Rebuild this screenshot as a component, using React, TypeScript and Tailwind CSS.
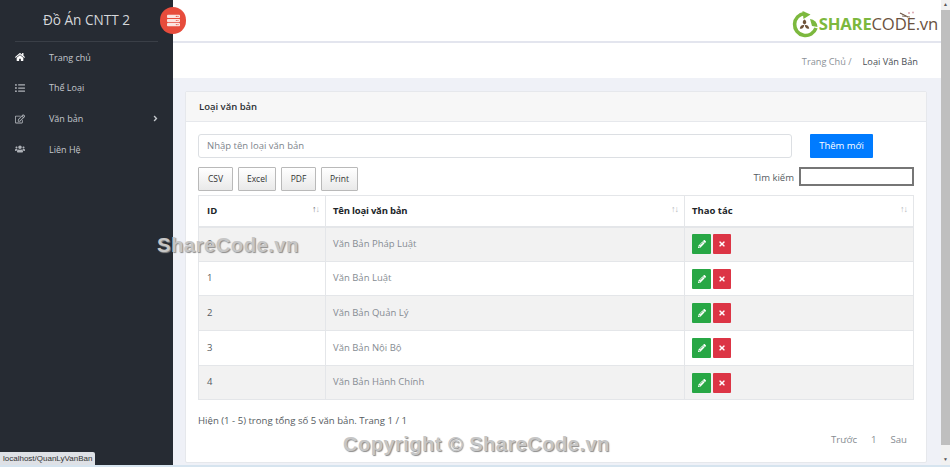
import { FaAngleRight, FaHome, FaListUl, FaPencilAlt, FaRegEdit, FaServer, FaTimes, FaUsers } from "react-icons/fa";

const menu = [
  { label: "Trang chủ", icon: <FaHome className="text-white" /> },
  { label: "Thể Loại", icon: <FaListUl /> },
  { label: "Văn bản", icon: <FaRegEdit />, more: true },
  { label: "Liên Hệ", icon: <FaUsers /> },
];

const rows = [
  { id: "0", name: "Văn Bản Pháp Luật" },
  { id: "1", name: "Văn Bản Luật" },
  { id: "2", name: "Văn Bản Quản Lý" },
  { id: "3", name: "Văn Bản Nội Bộ" },
  { id: "4", name: "Văn Bản Hành Chính" },
];

const exportButtons = [
  { label: "CSV", cls: "w-[35px]" },
  { label: "Excel", cls: "w-[38px]" },
  { label: "PDF", cls: "w-[35px]" },
  { label: "Print", cls: "w-[37px]" },
];

function SortArrows({ active }: { active?: boolean }) {
  return (
    <span className="absolute right-[6px] top-[6px] text-[9px] tracking-[-1px] text-[#b5b8bc]">
      <span className={active ? "text-[#6b7075]" : ""}>↑</span>↓
    </span>
  );
}

function Sidebar() {
  return (
    <aside className="w-[173px] shrink-0 bg-[#262b33] text-[#c3c7cc]">
      <div className="mx-[15px] flex h-[42px] items-center justify-center border-b border-[#3a3f47] text-[13.6px] text-[#d5d7da]">
        Đồ Án CNTT 2
      </div>
      <nav>
        {menu.map((item) => (
          <div key={item.label} className="flex h-[30.7px] items-center pl-[15px] pr-[13px] text-[9px]">
            <span className="w-[34px] text-[10px] text-[#aeb2b8]">{item.icon}</span>
            <span>{item.label}</span>
            {item.more && <FaAngleRight className="ml-auto text-[9px]" />}
          </div>
        ))}
      </nav>
    </aside>
  );
}

function Logo() {
  return (
    <div className="relative flex items-center">
      <svg width="27" height="27" viewBox="0 0 27 27">
        <path d="M13.5 2.5 A11 11 0 1 0 25 17" fill="none" stroke="#7cb83e" strokeWidth="3.6" />
        <path d="M11.5 0 L19.5 3.5 L12.5 8 Z" fill="#7cb83e" />
        <path d="M19 8 A8 8 0 0 1 26.5 16 L21 15 Z" fill="#7cb83e" />
        <path d="M13.5 8.5 C15.8 10 15.8 12.5 13.5 13.6 C11.2 12.5 11.2 10 13.5 8.5 Z" fill="#6f5238" />
        <path d="M8.8 17.5 C9.2 14.5 11.5 13.6 13.2 14.2 C12.8 16.8 11 18.6 8.8 17.5 Z" fill="#6f5238" />
        <path d="M18.2 17.5 C17.8 14.5 15.5 13.6 13.8 14.2 C14.2 16.8 16 18.6 18.2 17.5 Z" fill="#6f5238" />
      </svg>
      <span className="ml-[1px] text-[16.7px] font-bold leading-none tracking-[-0.2px] text-[#7cb83e]">SHARE</span>
      <span className="text-[16.7px] leading-none tracking-[-0.2px] text-[#6b5240]">CODE.vn</span>
      {/* little flourish above the E */}
      <svg className="absolute left-[108px] top-0" width="18" height="7" viewBox="0 0 18 7">
        <path d="M1 2 L9 6" stroke="#6b5240" strokeWidth="1.2" />
        <path d="M3 5 L11 6" stroke="#8a7565" strokeWidth="1" />
        <circle cx="10" cy="2" r="1" fill="#d9a0ac" />
        <circle cx="14" cy="1.5" r="0.9" fill="#d9a0ac" />
      </svg>
    </div>
  );
}

function Card() {
  return (
    <section className="flex h-[372px] flex-col rounded-[2px] border border-[#e6e8ec] bg-white">
      <div className="flex h-[30px] shrink-0 items-center border-b border-[#e6e8ec] bg-[#f7f7f7] px-[13px] pt-[1px] text-[9.5px] font-semibold text-[#2b2f33]">
        Loại văn bản
      </div>
      <div className="flex flex-1 flex-col px-[12px]">
        <div className="mt-[12px] flex items-center">
          <div className="flex h-[24px] w-[594px] items-center rounded-[3px] border border-[#dcdfe3] px-[8px] pt-[1px] text-[9.5px] text-[#7d848b]">
            Nhập tên loại văn bản
          </div>
          <button className="ml-[18px] h-[24px] w-[63px] rounded-[1px] bg-[#007bff] text-[9.5px] text-white">Thêm mới</button>
        </div>
        <div className="mt-[9px] flex items-start gap-[5px]">
          {exportButtons.map((b) => (
            <button
              key={b.label}
              className={`${b.cls} h-[24px] rounded-[1px] border border-[#b9b9b9] bg-gradient-to-b from-white to-[#e9e9e9] text-[8.5px] text-[#333]`}
            >
              {b.label}
            </button>
          ))}
          <span className="ml-auto mt-[4px] text-[9.5px] text-[#555b61]">Tìm kiếm</span>
          <div className="h-[19px] w-[115px] border-2 border-[#767676] bg-white" />
        </div>
        <table className="mt-[4px] w-[716px] table-fixed border-collapse text-[9.5px]">
          <thead>
            <tr className="h-[31px] text-[#212529]">
              <th className="relative w-[127px] border border-b-2 border-[#e4e6e9] px-[8px] text-left font-bold">
                ID
                <SortArrows active />
              </th>
              <th className="relative w-[359px] border border-b-2 border-[#e4e6e9] px-[7px] text-left font-bold tracking-[-0.2px]">
                Tên loại văn bản
                <SortArrows />
              </th>
              <th className="relative border border-b-2 border-[#e4e6e9] px-[7px] text-left font-bold">
                Thao tác
                <SortArrows />
              </th>
            </tr>
          </thead>
          <tbody>
            {rows.map((row, i) => (
              <tr key={row.id} className={i % 2 === 0 ? "h-[34.7px] bg-[#f2f2f2]" : "h-[34.7px] bg-white"}>
                <td className="border border-[#e4e6e9] px-[8px] text-[#555b61]">{row.id}</td>
                <td className="border border-[#e4e6e9] px-[7px] text-[#868c92]">{row.name}</td>
                <td className="border border-[#e4e6e9] px-[7px]">
                  <div className="flex gap-[2px]">
                    <span className="flex h-[20px] w-[19px] items-center justify-center rounded-[1px] bg-[#28a745] text-[8px] text-white">
                      <FaPencilAlt />
                    </span>
                    <span className="flex h-[20px] w-[18px] items-center justify-center rounded-[1px] bg-[#dc3545] text-[8px] text-white">
                      <FaTimes />
                    </span>
                  </div>
                </td>
              </tr>
            ))}
          </tbody>
        </table>
        <div className="mt-[14px] flex justify-between text-[9.6px] text-[#555b61]">
          <span>Hiện (1 - 5) trong tổng số 5 văn bản. Trang 1 / 1</span>
          <span className="mt-[19px] flex gap-[14px] pr-[7px] text-[#868c92]">
            <span>Trước</span>
            <span>1</span>
            <span>Sau</span>
          </span>
        </div>
      </div>
    </section>
  );
}

export default function App() {
  return (
    <div className="relative flex h-[467px] w-[950px] overflow-hidden bg-[#eff1f7] font-['Open_Sans',sans-serif]">
      <Sidebar />
      <main className="flex min-w-0 flex-1 flex-col">
        <header className="flex h-[43px] shrink-0 items-center justify-end border-b-2 border-[#e3e5ee] bg-white pr-[3px] pt-[8px]">
          <Logo />
        </header>
        <div className="flex h-[35px] shrink-0 items-center justify-end bg-white pr-[23px] pt-[3px] text-[9.2px]">
          <span className="text-[#8b9197]">Trang Chủ /</span>
          <span className="ml-[11px] text-[#4a4f55]">Loại Văn Bản</span>
        </div>
        <div className="pl-[12px] pr-[14px] pt-[13px]">
          <Card />
        </div>
      </main>
      <div className="flex w-[9px] shrink-0 flex-col bg-[#f1f1f1] pb-[2px]">
        <div className="flex h-[10px] items-center justify-center text-[5px] text-[#555]">▲</div>
        <div className="h-[435px] bg-[#bfbfbf]" />
        <div className="flex-1" />
        <div className="flex h-[10px] items-center justify-center text-[5px] text-[#555]">▼</div>
      </div>

      {/* red toggle sits over the sidebar edge */}
      <button className="absolute left-[160px] top-[7px] flex h-[27px] w-[26px] items-center justify-center rounded-full bg-[#e74c3c] text-[13px] text-[#fbe4e1]">
        <FaServer />
      </button>

      {/* watermarks */}
      <span className="absolute left-[157px] top-[235px] font-['Liberation_Sans',sans-serif] text-[20.4px] font-bold leading-none tracking-[0.4px] text-[#c6c6c6] [text-shadow:1px_1px_1px_#8c8c8c]">
        ShareCode.vn
      </span>
      <span className="absolute left-[343px] top-[434px] font-['Liberation_Sans',sans-serif] text-[20.2px] font-bold leading-none tracking-[0.4px] text-[#c6c6c6] [text-shadow:1px_1px_1px_#8c8c8c]">
        Copyright © ShareCode.vn
      </span>

      {/* browser status bubble + taskbar sliver */}
      <div className="absolute bottom-[2px] left-0 rounded-tr-[2px] bg-[#dee1e6] px-[3px] py-[1px] font-['Liberation_Sans',sans-serif] text-[8px] leading-[11px] text-[#333]">
        localhost/QuanLyVanBan
      </div>
      <div className="absolute bottom-0 left-0 h-[2px] w-full bg-[#d6e4ef]" />
    </div>
  );
}
